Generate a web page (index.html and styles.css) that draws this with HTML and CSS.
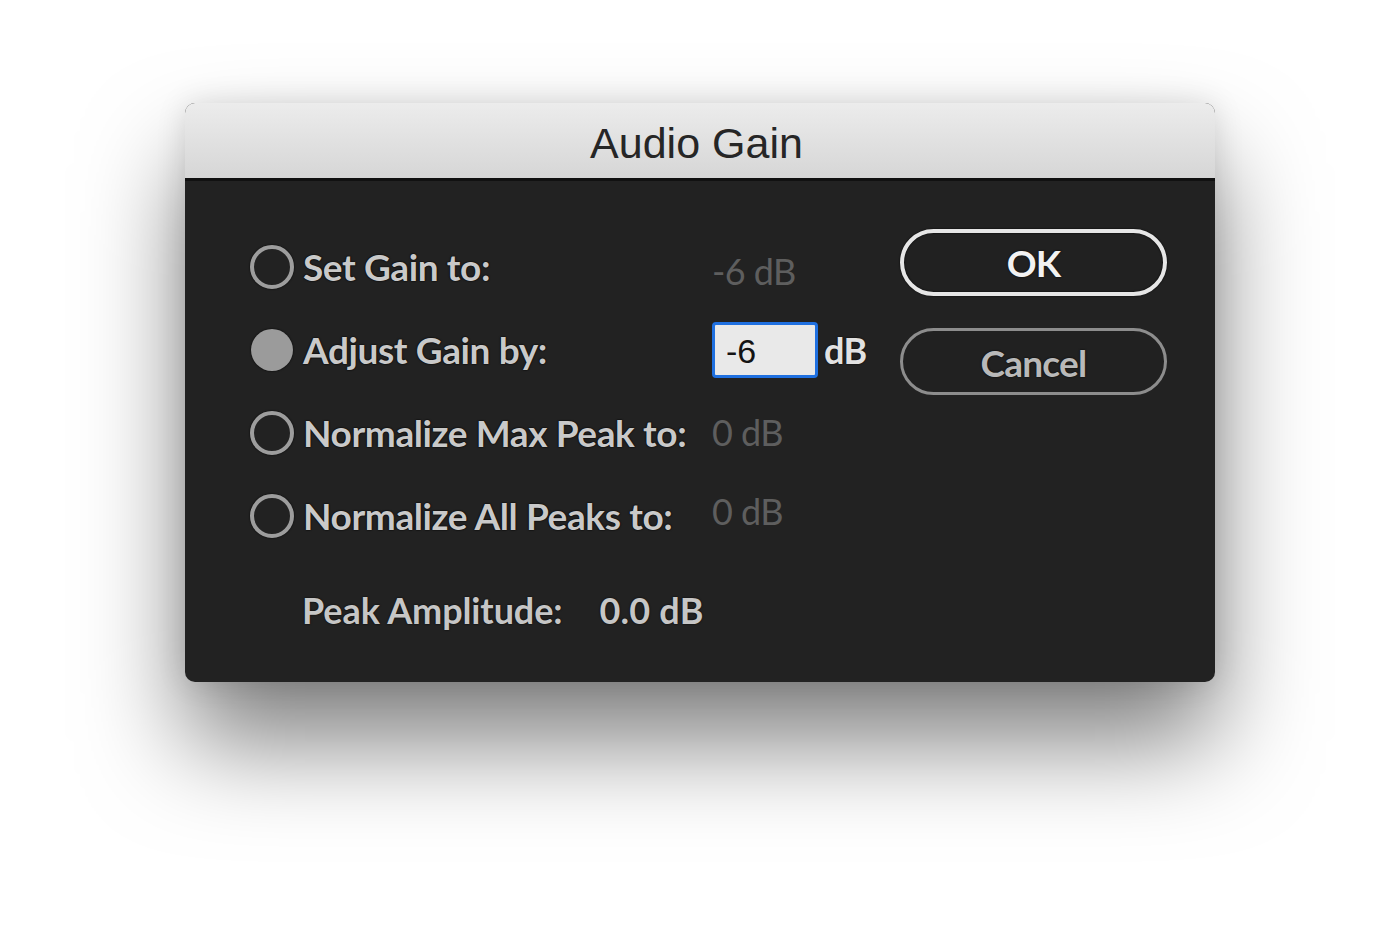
FILE: index.html
```html
<!DOCTYPE html>
<html>
<head>
<meta charset="utf-8">
<link rel="stylesheet" href="styles.css">
</head>
<body>
<div class="dialog">
  <div class="titlebar">Audio Gain</div>
  <div class="content">
    <div class="options">
      <span class="radio"></span>
      <span class="label">Set Gain to:</span>
      <span class="value dim v1">-6 dB</span>

      <span class="radio on"></span>
      <span class="label">Adjust Gain by:</span>
      <span class="value"><span class="input">-6</span><span class="unit">dB</span></span>

      <span class="radio"></span>
      <span class="label">Normalize Max Peak to:</span>
      <span class="value dim v3">0 dB</span>

      <span class="radio"></span>
      <span class="label">Normalize All Peaks to:</span>
      <span class="value dim v4">0 dB</span>

      <div class="peak">
        <span class="peak-label">Peak Amplitude:</span>
        <span class="peak-value">0.0 dB</span>
      </div>
    </div>
    <div class="buttons">
      <div class="btn ok">OK</div>
      <div class="btn cancel">Cancel</div>
    </div>
  </div>
</div>
</body>
</html>
```

FILE: styles.css
```css
html, body {
  margin: 0;
  padding: 0;
  background: #ffffff;
  width: 1400px;
  height: 947px;
  overflow: hidden;
}

.dialog {
  margin: 103px 0 0 185px;
  width: 1030px;
  height: 579px;
  border-radius: 10px;
  background: #222222;
  box-shadow: 0 60px 100px rgba(0,0,0,0.5), 0 0 30px rgba(0,0,0,0.12);
  overflow: hidden;
  display: flex;
  flex-direction: column;
}

.titlebar {
  height: 78px;
  flex: none;
  background: linear-gradient(#ececec, #d6d6d6);
  border-bottom: 3px solid #111111;
  display: flex;
  align-items: center;
  justify-content: center;
  font-family: "Liberation Sans", Arial, sans-serif;
  font-size: 43px;
  color: #262626;
  padding: 5px 7px 0 0;
  box-sizing: border-box;
}

.content {
  flex: 1;
  display: flex;
  padding: 44px 48px 0 65px;
}

.options {
  display: grid;
  grid-template-columns: 44px 400px 180px;
  grid-auto-rows: 83px;
  column-gap: 9px;
  align-items: center;
  font-family: "Lato", "Open Sans", sans-serif;
  font-weight: 700;
}

.radio {
  width: 44px;
  height: 44px;
  box-sizing: border-box;
  border-radius: 50%;
  border: 4px solid #9d9d9d;
  box-shadow: 0 0 2px #000;
}

.radio.on {
  width: 42px;
  height: 42px;
  margin-left: 1px;
  border: none;
  background: #9b9b9b;
}

.label {
  font-size: 37px;
  letter-spacing: -0.4px;
  color: #c9c9c9;
  text-shadow: 0 0 2px #000, 0 0 1px #000;
  white-space: nowrap;
}

.value {
  font-size: 36px;
  letter-spacing: -0.6px;
  display: flex;
  align-items: center;
}

.dim {
  color: #5e5e5e;
  font-weight: 400;
}

.v1 { margin-top: 8px; }
.v3 { margin-top: -2px; }
.v4 { margin-top: -10px; }

.input {
  width: 106px;
  height: 56px;
  box-sizing: border-box;
  border: 3px solid #1f70e0;
  border-radius: 4px;
  background: #e9e9e9;
  color: #141414;
  font-family: "Liberation Sans", Arial, sans-serif;
  font-weight: 400;
  font-size: 34px;
  letter-spacing: 0;
  padding: 9px 0 0 11px;
  line-height: 1;
}

.unit {
  margin-left: 6px;
  color: #e2e2e2;
  text-shadow: 0 0 2px #000;
  font-size: 36px;
}

.peak {
  grid-column: 1 / 4;
  display: flex;
  padding-left: 52px;
  margin-top: 22px;
  color: #c6c6c6;
  font-size: 36px;
  letter-spacing: -0.1px;
  text-shadow: 0 0 2px #000;
}

.peak-value {
  margin-left: 37px;
  letter-spacing: 0.2px;
}

.buttons {
  margin-left: auto;
  display: flex;
  flex-direction: column;
  gap: 32px;
  padding-top: 4px;
}

.btn {
  width: 267px;
  height: 67px;
  box-sizing: border-box;
  border-radius: 34px;
  display: flex;
  align-items: center;
  justify-content: center;
  font-family: "Lato", "Open Sans", sans-serif;
  font-weight: 700;
  font-size: 37px;
  letter-spacing: -0.8px;
  background: #212121;
}

.ok {
  border: 4px solid #e6e6e6;
  color: #f2f2f2;
  box-shadow: 0 0 2px #000, inset 0 0 2px #000;
  text-shadow: 0 0 2px #000;
}

.cancel {
  border: 3px solid #8d8d8d;
  color: #b9b9b9;
  text-shadow: 0 0 2px #000;
  padding-top: 2px;
}
```
